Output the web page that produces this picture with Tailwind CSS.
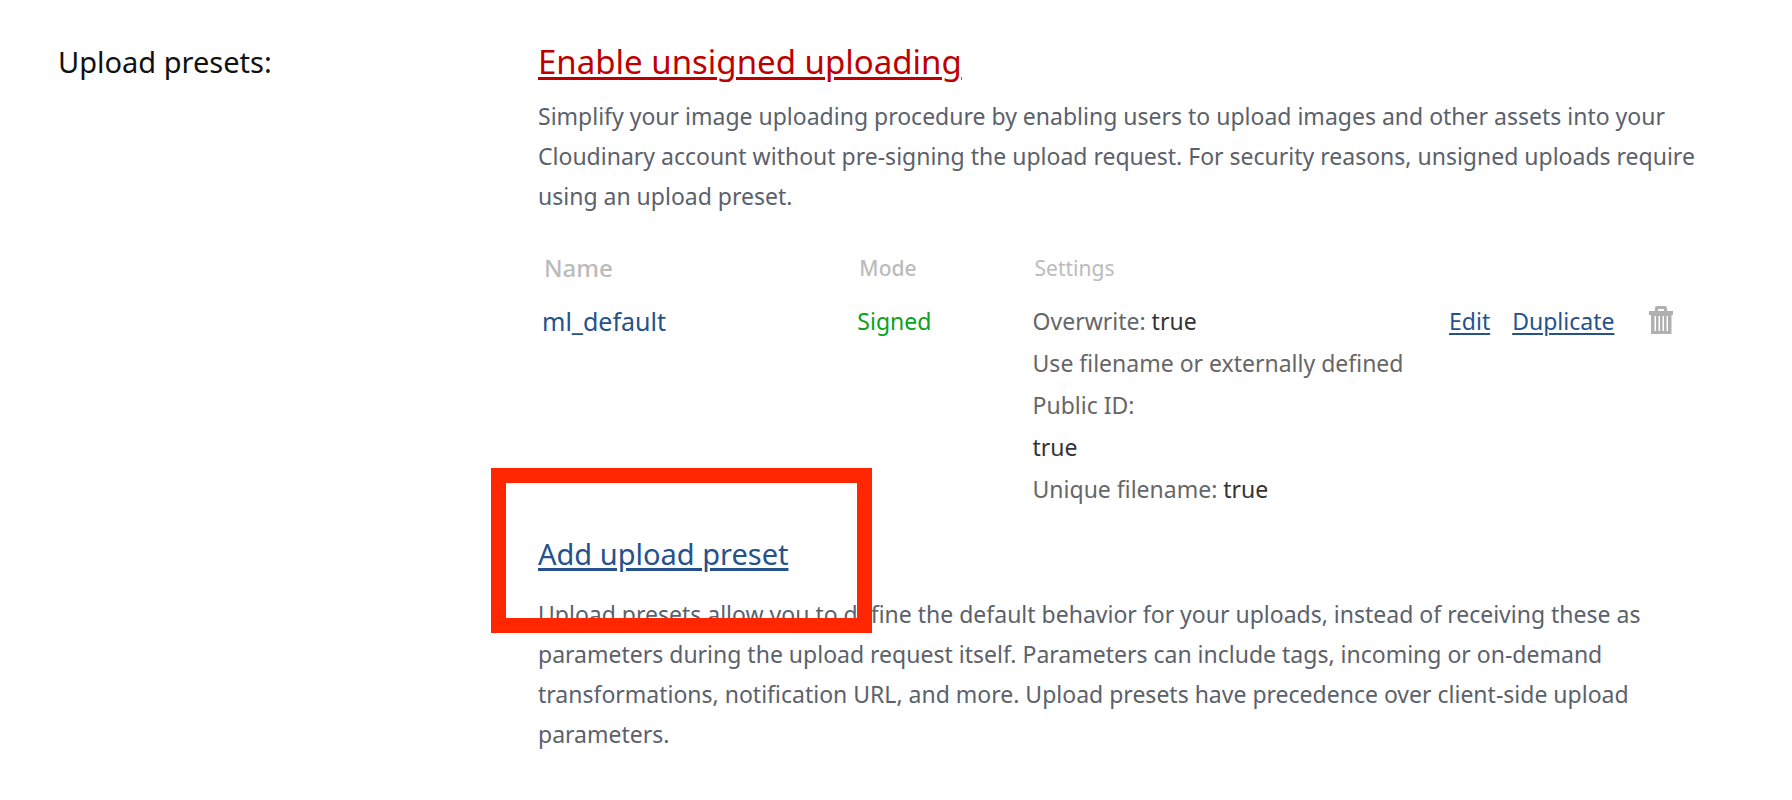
<!DOCTYPE html>
<html lang="en">
<head>
<meta charset="utf-8">
<meta name="viewport" content="width=device-width, initial-scale=1">
<title>Upload presets</title>
<script src="https://cdn.jsdelivr.net/npm/@tailwindcss/browser@4"></script>
</head>
<body class="bg-white font-['Noto_Sans',sans-serif] text-[23px] leading-[40px] text-[#5b616b]">
<main class="flex pt-[42px] pr-[86px] pb-8 pl-[58px]">
  <h2 class="w-[480px] shrink-0 text-[29px] text-[#111111]">Upload presets:</h2>
  <section class="min-w-0 flex-1">
    <a href="#" class="block w-fit text-[33px] text-[#c00000] underline decoration-[3px] underline-offset-[3px]">Enable unsigned uploading</a>
    <p class="mt-[14px]">Simplify your image uploading procedure by enabling users to upload images and other assets into your<br>Cloudinary account without pre-signing the upload request. For security reasons, unsigned uploads require<br>using an upload preset.</p>
    <table class="mt-8 w-full table-fixed text-left">
      <thead class="text-[#bbbbbb]">
        <tr>
          <th class="w-[27%] pl-[6px] text-[24px] font-medium">Name</th>
          <th class="w-[15%] pl-[6px] text-[21px] font-medium">Mode</th>
          <th class="w-[36%] pl-[6px] text-[21px] font-normal">Settings</th>
          <td class="w-[22%]"></td>
        </tr>
      </thead>
      <tbody class="align-top leading-[42px]">
        <tr>
          <td class="pt-[12px] pl-[4px] text-[25px] text-[#25528c]">ml_default</td>
          <td class="pt-[12px] pl-[4px] text-[#0aa11f]">Signed</td>
          <td class="pt-[12px] pl-[4px] text-[#666666]">
            <div>Overwrite: <span class="text-[#333333]">true</span></div>
            <div>Use filename or externally defined<br>Public ID:</div>
            <div class="text-[#333333]">true</div>
            <div>Unique filename: <span class="text-[#333333]">true</span></div>
          </td>
          <td class="pt-[12px]">
            <div class="flex items-center text-[#25528c]">
              <a href="#" class="underline decoration-2 underline-offset-[3px]">Edit</a>
              <a href="#" class="ml-[22px] underline decoration-2 underline-offset-[3px]">Duplicate</a>
              <button type="button" aria-label="Delete preset" class="ml-auto mr-[33px]">
                <svg class="block h-[30px] w-6" viewBox="0 0 24 30" aria-hidden="true">
                  <path fill="#b0b0b0" fill-rule="evenodd" d="M8 0H16Q18 0 18 2V5H24V9H22.500V28H2V9H0V5H6V2Q6 0 8 0ZM9 3V5H15V3ZM5.500 10V25H7V10ZM9.500 10V25H11V10ZM13.500 10V25H15V10ZM17.500 10V25H19V10Z"/>
                </svg>
              </button>
            </div>
          </td>
        </tr>
      </tbody>
    </table>
    <div class="relative mt-6 w-fit">
      <a href="#" class="text-[29px] text-[#25528c] underline decoration-[3px] underline-offset-[3px]">Add upload preset</a>
      <div class="pointer-events-none absolute -top-[66px] -left-[47px] z-10 h-[165px] w-[381px] border-[15px] border-[#ff2600]"></div>
    </div>
    <p class="mt-[18px]">Upload presets allow you to define the default behavior for your uploads, instead of receiving these as<br>parameters during the upload request itself. Parameters can include tags, incoming or on-demand<br>transformations, notification URL, and more. Upload presets have precedence over client-side upload<br>parameters.</p>
  </section>
</main>
</body>
</html>
